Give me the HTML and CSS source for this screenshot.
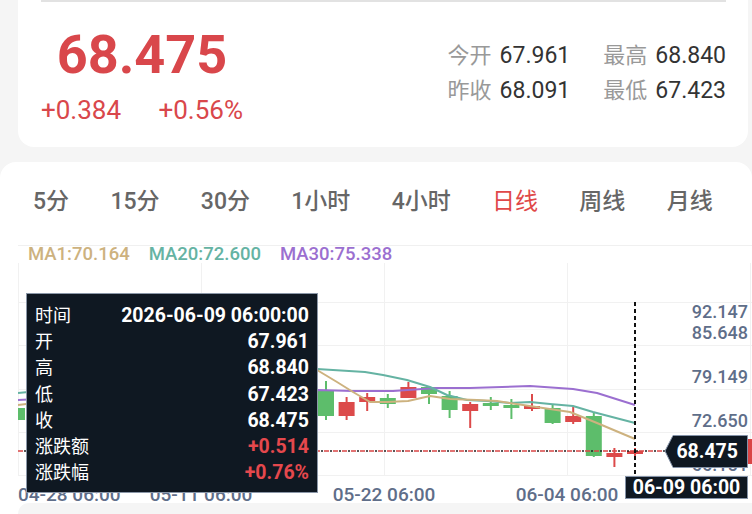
FILE: index.html
```html
<!DOCTYPE html>
<html lang="zh-CN">
<head>
    <meta charset="UTF-8">
    <meta name="viewport" content="width=device-width, initial-scale=1.0">
    <title>行情K线</title>
    <link rel="stylesheet" href="styles.css">
</head>
<body>
<div class="quote-card">
    <div class="quote-line"></div>
    <div class="quote-body">
        <div class="price-main">
            <div class="price-now">68.475</div>
            <div class="price-change">
                <span>+0.384</span>
                <span>+0.56%</span>
            </div>
        </div>
        <div class="quote-stats">
            <div><span class="stat-label">今开</span><span class="stat-value">67.961</span></div>
            <div><span class="stat-label">最高</span><span class="stat-value">68.840</span></div>
            <div><span class="stat-label">昨收</span><span class="stat-value">68.091</span></div>
            <div><span class="stat-label">最低</span><span class="stat-value">67.423</span></div>
        </div>
    </div>
</div>

<div class="kline-card">
    <div class="period-tabs">
        <span>5分</span>
        <span>15分</span>
        <span>30分</span>
        <span>1小时</span>
        <span>4小时</span>
        <span class="active">日线</span>
        <span>周线</span>
        <span>月线</span>
    </div>
    <div class="divider"></div>

    <div class="chart">
        <div class="ma-legend">
            <span class="ma1">MA1:70.164</span>
            <span class="ma20">MA20:72.600</span>
            <span class="ma30">MA30:75.338</span>
        </div>

        <svg class="chart-svg" width="752" height="242" viewBox="0 263 752 242">
            <defs>
                <clipPath id="plot">
                    <rect x="18" y="263" width="734" height="212"></rect>
                </clipPath>
            </defs>

            <!-- grid -->
            <g stroke="#f1f1f1" stroke-width="1">
                <line x1="18.5" y1="263" x2="18.5" y2="475"></line>
                <line x1="201.5" y1="263" x2="201.5" y2="475"></line>
                <line x1="384.5" y1="263" x2="384.5" y2="475"></line>
                <line x1="567.5" y1="263" x2="567.5" y2="475"></line>
                <line x1="750.5" y1="263" x2="750.5" y2="475"></line>
                <line x1="18" y1="302.5" x2="752" y2="302.5"></line>
                <line x1="18" y1="345.5" x2="752" y2="345.5"></line>
                <line x1="18" y1="389.5" x2="752" y2="389.5"></line>
                <line x1="18" y1="432.5" x2="752" y2="432.5"></line>
                <line x1="18" y1="475.5" x2="752" y2="475.5"></line>
            </g>

            <g clip-path="url(#plot)">
                <!-- green candles -->
                <g fill="#5dbd6b" stroke="#5dbd6b" stroke-width="2">
                    <line x1="17" y1="405" x2="17" y2="422"></line><rect x="9" y="408" width="16" height="12" stroke="none"></rect>
                    <line x1="58.2" y1="384" x2="58.2" y2="404"></line><rect x="50.2" y="388" width="16" height="12" stroke="none"></rect>
                    <line x1="99.4" y1="372" x2="99.4" y2="390"></line><rect x="91.4" y="378" width="16" height="8" stroke="none"></rect>
                    <line x1="140.6" y1="362" x2="140.6" y2="382"></line><rect x="132.6" y="366" width="16" height="12" stroke="none"></rect>
                    <line x1="181.8" y1="358" x2="181.8" y2="374"></line><rect x="173.8" y="362" width="16" height="8" stroke="none"></rect>
                    <line x1="223" y1="348" x2="223" y2="368"></line><rect x="215" y="352" width="16" height="10" stroke="none"></rect>
                    <line x1="264.2" y1="358" x2="264.2" y2="378"></line><rect x="256.2" y="362" width="16" height="12" stroke="none"></rect>
                    <line x1="305.4" y1="368" x2="305.4" y2="392"></line><rect x="297.4" y="372" width="16" height="16" stroke="none"></rect>
                    <line x1="326" y1="381" x2="326" y2="420"></line><rect x="318" y="390" width="16" height="26" stroke="none"></rect>
                    <line x1="387.8" y1="394" x2="387.8" y2="408"></line><rect x="379.8" y="398" width="16" height="6" stroke="none"></rect>
                    <line x1="429" y1="386" x2="429" y2="404"></line><rect x="421" y="387" width="16" height="7" stroke="none"></rect>
                    <line x1="449.6" y1="391" x2="449.6" y2="418"></line><rect x="441.6" y="396" width="16" height="14" stroke="none"></rect>
                    <line x1="490.8" y1="397" x2="490.8" y2="410"></line><rect x="482.8" y="403" width="16" height="3" stroke="none"></rect>
                    <line x1="511.4" y1="399" x2="511.4" y2="419"></line><rect x="503.4" y="405" width="16" height="3" stroke="none"></rect>
                    <line x1="552.6" y1="405" x2="552.6" y2="424"></line><rect x="544.6" y="408" width="16" height="15" stroke="none"></rect>
                    <line x1="593.8" y1="413" x2="593.8" y2="457"></line><rect x="585.8" y="416" width="16" height="40" stroke="none"></rect>
                </g>
                <!-- red candles -->
                <g fill="#dc4a4a" stroke="#dc4a4a" stroke-width="2">
                    <line x1="37.6" y1="390" x2="37.6" y2="415"></line><rect x="29.6" y="395" width="16" height="15" stroke="none"></rect>
                    <line x1="78.8" y1="376" x2="78.8" y2="396"></line><rect x="70.8" y="380" width="16" height="12" stroke="none"></rect>
                    <line x1="120" y1="368" x2="120" y2="388"></line><rect x="112" y="372" width="16" height="12" stroke="none"></rect>
                    <line x1="161.2" y1="356" x2="161.2" y2="376"></line><rect x="153.2" y="360" width="16" height="12" stroke="none"></rect>
                    <line x1="202.4" y1="350" x2="202.4" y2="370"></line><rect x="194.4" y="356" width="16" height="10" stroke="none"></rect>
                    <line x1="243.6" y1="354" x2="243.6" y2="374"></line><rect x="235.6" y="358" width="16" height="10" stroke="none"></rect>
                    <line x1="284.8" y1="364" x2="284.8" y2="384"></line><rect x="276.8" y="368" width="16" height="12" stroke="none"></rect>
                    <line x1="346.6" y1="397" x2="346.6" y2="420"></line><rect x="338.6" y="402" width="16" height="14" stroke="none"></rect>
                    <line x1="367.2" y1="393" x2="367.2" y2="411"></line><rect x="359.2" y="397" width="16" height="5" stroke="none"></rect>
                    <line x1="408.4" y1="382" x2="408.4" y2="398"></line><rect x="400.4" y="387" width="16" height="11" stroke="none"></rect>
                    <line x1="470.2" y1="402" x2="470.2" y2="428"></line><rect x="462.2" y="404" width="16" height="7" stroke="none"></rect>
                    <line x1="532" y1="394" x2="532" y2="411"></line><rect x="524" y="406" width="16" height="3" stroke="none"></rect>
                    <line x1="573.2" y1="407" x2="573.2" y2="424"></line><rect x="565.2" y="416" width="16" height="6" stroke="none"></rect>
                    <line x1="614.4" y1="448" x2="614.4" y2="467"></line><rect x="606.4" y="453" width="16" height="4" stroke="none"></rect>
                    <line x1="635" y1="448" x2="635" y2="458"></line><rect x="627" y="451" width="16" height="3" stroke="none"></rect>
                </g>

                <!-- moving averages -->
                <g fill="none" stroke-width="2" stroke-linejoin="round">
                    <polyline stroke="#9b6fd0" points="18,400 100,396 200,393 317,390 353,391 393,391 437,388 470,388 530,386 573,389 597,393 635,405"></polyline>
                    <polyline stroke="#65b3a3" points="18,393 100,385 200,376 317,369 365,372 383,375 407,380 430,387 447,395 467,400 487,401 510,403 530,402 550,404 573,406 593,412 635,423"></polyline>
                    <polyline stroke="#cdb27f" points="18,405 100,395 200,380 317,370 337,382 353,392 370,402 387,402 408,401 430,396 450,399 477,400 497,401 523,405 543,408 570,412 597,423 635,439"></polyline>
                </g>
            </g>

            <!-- price line and crosshair -->
            <line x1="18" y1="451" x2="665" y2="451" stroke="#d94545" stroke-width="1.5" stroke-dasharray="5 4"></line>
            <line x1="18" y1="451" x2="665" y2="451" stroke="#222" stroke-width="1.5" stroke-dasharray="2 7" stroke-dashoffset="-6"></line>
            <line x1="635" y1="302" x2="635" y2="476" stroke="#111" stroke-width="2" stroke-dasharray="4 3"></line>

            <!-- y axis -->
            <g class="axis-text" text-anchor="end">
                <text x="748" y="318">92.147</text>
                <text x="748" y="339">85.648</text>
                <text x="748" y="383">79.149</text>
                <text x="748" y="427">72.650</text>
                <text x="748" y="471">66.151</text>
            </g>

            <!-- x axis -->
            <g class="axis-text date-text">
                <text x="18" y="501">04-28 06:00</text>
                <text x="201" y="501" text-anchor="middle">05-11 06:00</text>
                <text x="384" y="501" text-anchor="middle">05-22 06:00</text>
                <text x="567" y="501" text-anchor="middle">06-04 06:00</text>
            </g>

            <!-- last price tag -->
            <rect x="700" y="439" width="60" height="25" fill="#d94545"></rect>
            <polygon points="665,451 673,435.5 747.5,435.5 747.5,467.5 673,467.5" fill="#0f1822" stroke="#8593a8" stroke-width="1"></polygon>
            <text class="tag-text" x="738" y="458" text-anchor="end">68.475</text>

            <!-- crosshair date tag -->
            <rect x="625.5" y="476.5" width="122" height="22" fill="#0f1822" stroke="#8593a8" stroke-width="1"></rect>
            <text class="tag-text" x="686.5" y="494" text-anchor="middle">06-09 06:00</text>
        </svg>

        <div class="tooltip">
            <div class="tip-row"><span>时间</span><b>2026-06-09 06:00:00</b></div>
            <div class="tip-row"><span>开</span><b>67.961</b></div>
            <div class="tip-row"><span>高</span><b>68.840</b></div>
            <div class="tip-row"><span>低</span><b>67.423</b></div>
            <div class="tip-row"><span>收</span><b>68.475</b></div>
            <div class="tip-row"><span>涨跌额</span><b class="up">+0.514</b></div>
            <div class="tip-row"><span>涨跌幅</span><b class="up">+0.76%</b></div>
        </div>
    </div>
    <div class="chart-foot"></div>
</div>
</body>
</html>
```

FILE: styles.css
```css
body {
    margin: 0;
    background-color: #f5f5f5;
    font-family: Roboto, "Noto Sans CJK SC", sans-serif;
    overflow: hidden;
}

.quote-card {
    height: 147px;
    box-sizing: border-box;
    margin: 0 4px 0 18px;
    padding: 0 22px 0 23px;
    background-color: #fff;
    border-radius: 0 0 16px 16px;
}

.quote-line {
    border-top: 2px solid #e2e2e2;
}

.quote-body {
    display: flex;
    justify-content: space-between;
    align-items: center;
    padding-top: 21px;
}

.price-main {
    width: 202px;
    text-align: center;
    color: #d9474b;
}

.price-now {
    font-size: 54px;
    font-weight: 700;
    line-height: 64px;
}

.price-change {
    display: flex;
    justify-content: space-between;
    margin-top: 8px;
    font-size: 26px;
    line-height: 30px;
}

.quote-stats {
    display: grid;
    grid-template-columns: auto auto;
    column-gap: 33px;
    line-height: 33px;
}

.stat-label {
    font-size: 22px;
    color: #999;
}

.stat-value {
    margin-left: 8px;
    font-size: 23px;
    color: #333;
}

.kline-card {
    height: 352px;
    margin-top: 15px;
    background-color: #fff;
    border-radius: 16px 16px 0 0;
}

.period-tabs {
    display: flex;
    gap: 41.3px;
    padding: 24px 0 27px 33px;
    font-size: 23px;
    font-weight: 500;
    line-height: 32px;
    color: #666;
}

.period-tabs .active {
    color: #e04848;
    font-weight: 400;
}

.divider {
    margin-left: 18px;
    border-top: 1px solid #f0f0f0;
}

.chart {
    position: relative;
}

.ma-legend {
    display: flex;
    gap: 19px;
    height: 17px;
    padding-left: 28px;
    font-size: 18.5px;
    font-weight: 500;
    line-height: 17px;
}

.ma1 { color: #cdb27f; }
.ma20 { color: #65b3a3; }
.ma30 { color: #9b6fd0; }

.chart-svg {
    display: block;
    margin-bottom: -2px;
}

.axis-text {
    font-size: 18px;
    font-weight: 500;
    fill: #5f6e89;
}

.date-text {
    font-size: 19px;
}

.tag-text {
    font-size: 19.5px;
    font-weight: 700;
    fill: #fff;
}

.tooltip {
    position: absolute;
    left: 26px;
    top: 47px;
    width: 292px;
    height: 200px;
    box-sizing: border-box;
    padding: 9px 8px 0 8px;
    background-color: #0f1822;
    border: 1px solid #8b97a8;
    color: #fff;
    font-size: 18px;
}

.tip-row {
    display: flex;
    justify-content: space-between;
    line-height: 26.2px;
}

.tip-row b {
    font-size: 19.5px;
    font-weight: 700;
}

.tip-row .up {
    color: #e5484d;
}

.chart-foot {
    position: relative;
    height: 11px;
    margin-left: 18px;
    background-color: #f5f5f5;
    border-top-left-radius: 12px;
}
```
